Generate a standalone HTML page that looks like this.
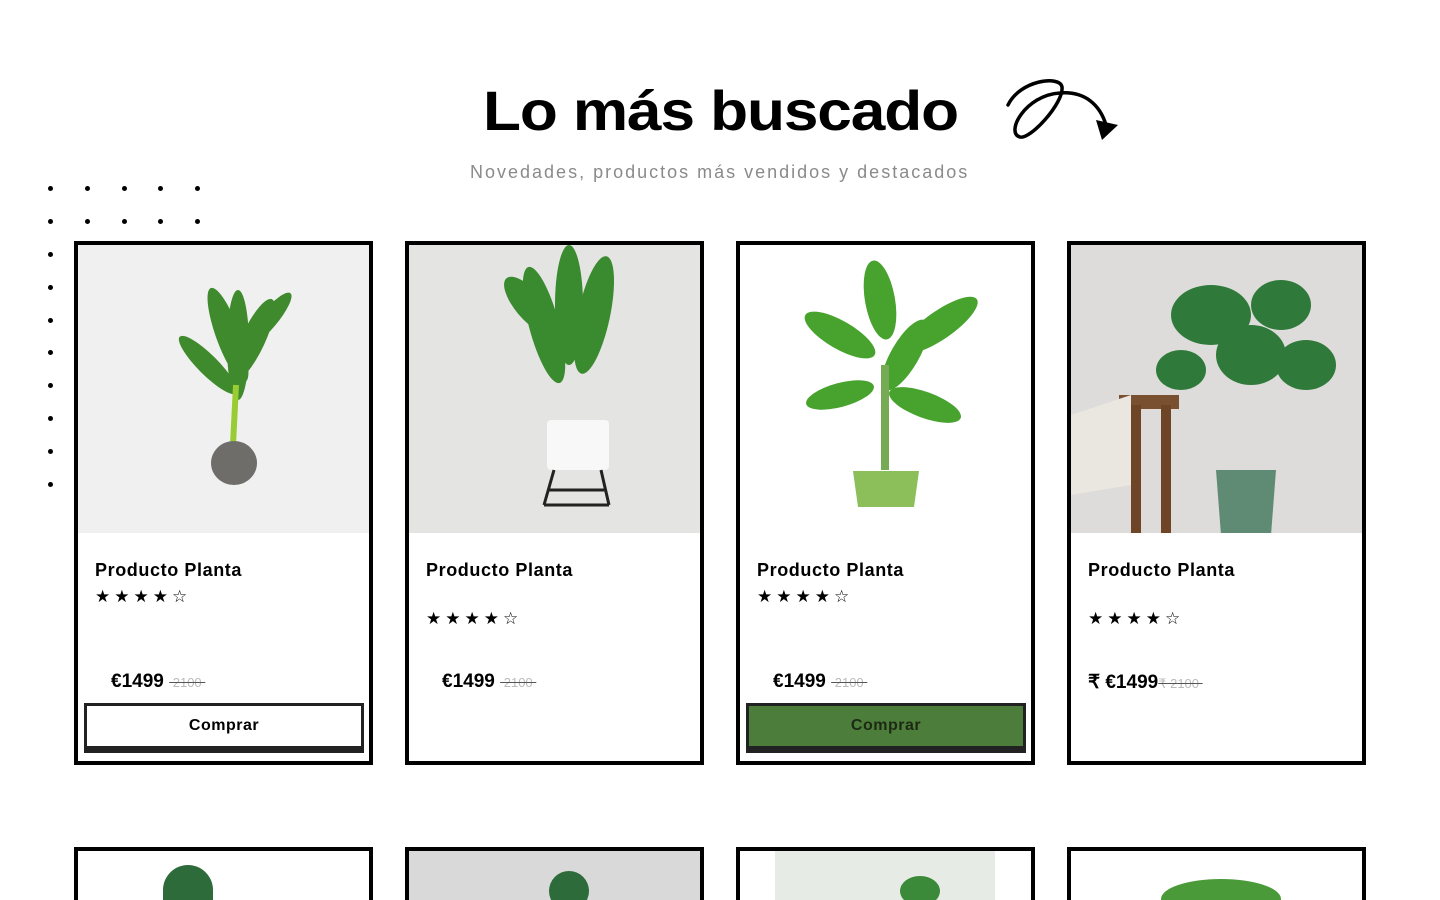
<!DOCTYPE html>
<html style="overflow:hidden;height:900px"><head><meta charset="utf-8"><style>
body{margin:0;width:1440px;height:900px;background:#fff;font-family:"Liberation Sans",sans-serif;position:relative;overflow:hidden}
h1{position:absolute;left:483px;top:78px;margin:0;font-size:56px;font-weight:900;letter-spacing:-1px;color:#000;white-space:nowrap;transform:scaleX(1.11);transform-origin:left}
.sub{position:absolute;left:470px;top:162px;font-size:18px;color:#8a8a8a;white-space:nowrap;letter-spacing:2px}
.dot{position:absolute;width:5px;height:5px;border-radius:50%;background:#000}
.card{position:absolute;top:241px;width:291px;height:516px;border:4px solid #000;background:#fff}
.img{position:absolute;left:0;top:0;width:291px;height:288px;overflow:hidden}
.name{position:absolute;left:17px;top:315px;font-size:18px;font-weight:bold;letter-spacing:0.6px}
.stars{position:absolute;left:17px;font-size:17px;letter-spacing:4px}
.price{position:absolute;left:33px;top:426px;font-size:19px;font-weight:900;white-space:nowrap}
.price s{font-size:13px;color:#bbb;font-weight:normal;text-decoration-color:#555}
.btn{position:absolute;left:6px;top:458px;width:274px;height:40px;border:3px solid #222;border-bottom-width:7px;text-align:center;line-height:40px;font-weight:bold;font-size:16px;letter-spacing:0.5px}
.card2{position:absolute;top:847px;width:291px;height:49px;border:4px solid #000;border-bottom:0;background:#fff;overflow:hidden}
</style></head><body>
<h1>Lo más buscado</h1>
<svg style="position:absolute;left:1000px;top:75px" width="125" height="70" viewBox="0 0 125 70"><path d="M8 30 C20 5 60 0 62 12 C64 28 30 65 20 62 C5 58 25 20 60 18 C85 16 100 30 106 50" fill="none" stroke="#000" stroke-width="3.5" stroke-linecap="round"/><path d="M96 45 L118 50 L102 65 Z" fill="#000"/></svg>
<div class="sub">Novedades, productos más vendidos y destacados</div>
<div class="dot" style="left:48px;top:186px"></div><div class="dot" style="left:85px;top:186px"></div><div class="dot" style="left:122px;top:186px"></div><div class="dot" style="left:158px;top:186px"></div><div class="dot" style="left:195px;top:186px"></div>
<div class="dot" style="left:48px;top:219px"></div><div class="dot" style="left:85px;top:219px"></div><div class="dot" style="left:122px;top:219px"></div><div class="dot" style="left:158px;top:219px"></div><div class="dot" style="left:195px;top:219px"></div>
<div class="dot" style="left:48px;top:252px"></div><div class="dot" style="left:48px;top:285px"></div><div class="dot" style="left:48px;top:318px"></div><div class="dot" style="left:48px;top:350px"></div><div class="dot" style="left:48px;top:383px"></div><div class="dot" style="left:48px;top:416px"></div><div class="dot" style="left:48px;top:449px"></div><div class="dot" style="left:48px;top:482px"></div>

<div class="card" style="left:74px">
<div class="img" style="background:#f0f0f0"><svg width="291" height="288"><g fill="#3f8a2c"><ellipse cx="150" cy="90" rx="12" ry="50" transform="rotate(-20 150 90)"/><ellipse cx="175" cy="95" rx="12" ry="45" transform="rotate(25 175 95)"/><ellipse cx="130" cy="120" rx="10" ry="40" transform="rotate(-45 130 120)"/><ellipse cx="190" cy="75" rx="9" ry="35" transform="rotate(40 190 75)"/><ellipse cx="160" cy="100" rx="11" ry="55"/></g><path d="M155 200 L158 140" stroke="#9c3" stroke-width="6"/><ellipse cx="156" cy="218" rx="23" ry="22" fill="#6e6d6a"/></svg></div>
<div class="name">Producto Planta</div><div class="stars" style="top:342px">★★★★☆</div>
<div class="price">€1499 <s>&nbsp;2100&nbsp;</s></div><div class="btn">Comprar</div></div>

<div class="card" style="left:405px">
<div class="img" style="background:#e4e4e2"><svg width="291" height="288"><g fill="#3a8a30"><ellipse cx="135" cy="80" rx="15" ry="60" transform="rotate(-15 135 80)"/><ellipse cx="185" cy="70" rx="16" ry="60" transform="rotate(12 185 70)"/><ellipse cx="160" cy="60" rx="14" ry="60"/><ellipse cx="120" cy="60" rx="14" ry="35" transform="rotate(-40 120 60)"/></g><rect x="138" y="175" width="62" height="50" rx="4" fill="#f8f8f8"/><path d="M145 225 L135 260 M192 225 L200 260 M140 245 L197 245 M135 260 L200 260" stroke="#222" stroke-width="3" fill="none"/></svg></div>
<div class="name">Producto Planta</div><div class="stars" style="top:364px">★★★★☆</div>
<div class="price">€1499 <s>&nbsp;2100&nbsp;</s></div></div>

<div class="card" style="left:736px">
<div class="img" style="background:#fff"><svg width="291" height="288"><g fill="#47a32e"><ellipse cx="100" cy="90" rx="40" ry="14" transform="rotate(30 100 90)"/><ellipse cx="200" cy="80" rx="45" ry="14" transform="rotate(-35 200 80)"/><ellipse cx="140" cy="55" rx="15" ry="40" transform="rotate(-10 140 55)"/><ellipse cx="185" cy="160" rx="38" ry="13" transform="rotate(20 185 160)"/><ellipse cx="100" cy="150" rx="35" ry="12" transform="rotate(-15 100 150)"/><ellipse cx="165" cy="110" rx="40" ry="14" transform="rotate(-60 165 110)"/></g><path d="M145 225 L145 120" stroke="#7a5" stroke-width="8"/><path d="M113 226 L179 226 L174 262 L118 262 Z" fill="#8cbf5a"/></svg></div>
<div class="name">Producto Planta</div><div class="stars" style="top:342px">★★★★☆</div>
<div class="price">€1499 <s>&nbsp;2100&nbsp;</s></div><div class="btn" style="background:#4d7d3a;color:#1c2a14">Comprar</div></div>

<div class="card" style="left:1067px">
<div class="img" style="background:#dedcdb"><svg width="291" height="288"><rect x="48" y="150" width="60" height="14" fill="#7a5130"/><rect x="60" y="160" width="10" height="128" fill="#6e4527"/><rect x="90" y="160" width="10" height="128" fill="#6e4527"/><path d="M0 170 L60 150 L60 240 L0 250 Z" fill="#eae6e0"/><g fill="#2f7a3a"><ellipse cx="140" cy="70" rx="40" ry="30"/><ellipse cx="210" cy="60" rx="30" ry="25"/><ellipse cx="235" cy="120" rx="30" ry="25"/><ellipse cx="110" cy="125" rx="25" ry="20"/><ellipse cx="180" cy="110" rx="35" ry="30"/></g><path d="M145 225 L150 290 L200 290 L205 225 Z" fill="#5f8a74"/></svg></div>
<div class="name">Producto Planta</div><div class="stars" style="top:364px">★★★★☆</div>
<div class="price" style="left:17px">₹ €1499<s>₹ 2100&nbsp;</s></div></div>

<div class="card2" style="left:74px;background:#fff"><div style="position:absolute;left:85px;top:14px;width:50px;height:50px;border-radius:50% 50% 0 0;background:#2e6b3a"></div></div>
<div class="card2" style="left:405px;background:#d9d9d9"><div style="position:absolute;left:140px;top:20px;width:40px;height:40px;border-radius:50%;background:#2e6b3a"></div></div>
<div class="card2" style="left:736px;background:#fff"><div style="position:absolute;left:35px;top:0;width:220px;height:80px;background:#e7ebe6"></div><div style="position:absolute;left:160px;top:25px;width:40px;height:30px;border-radius:50%;background:#3b8a3a"></div></div>
<div class="card2" style="left:1067px;background:#fff"><div style="position:absolute;left:90px;top:28px;width:120px;height:40px;border-radius:50%;background:#4a9a3a"></div></div>
</body></html>
